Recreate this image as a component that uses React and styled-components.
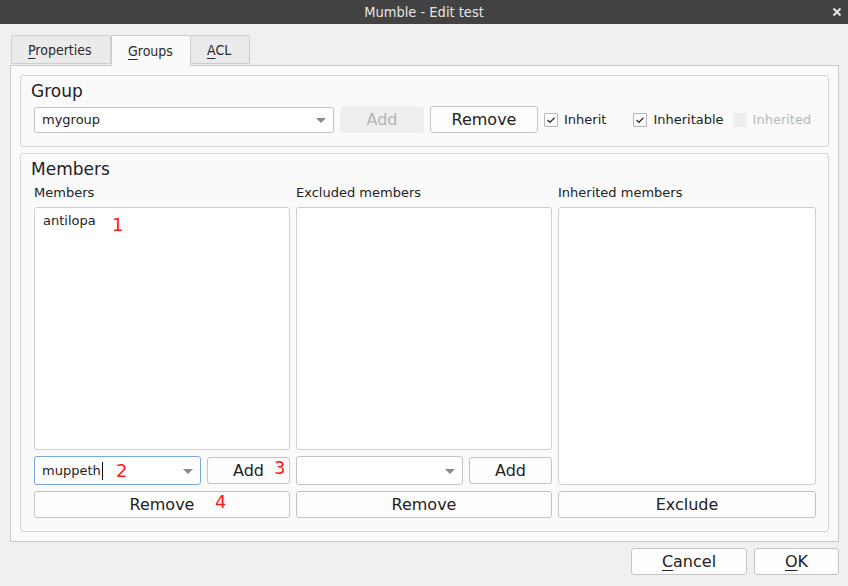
import React from 'react'
import styled, { createGlobalStyle } from 'styled-components'

const Global = createGlobalStyle`
  * { box-sizing: border-box; }
  html, body { margin: 0; padding: 0; background: #f0f0f0; }
  body {
    font-family: "DejaVu Sans", "Noto Sans", sans-serif;
    font-size: 13px;
    color: #222;
  }
`

const Window = styled.div`
  width: 848px;
  height: 586px;
  display: flex;
  flex-direction: column;
  background: #f0f0f0;
`

const TitleBar = styled.div`
  height: 24px;
  background: #424242;
  color: #e6e6e6;
  display: flex;
  align-items: center;
  justify-content: center;
  position: relative;
  font-family: "DejaVu Sans Condensed", "DejaVu Sans", sans-serif;
  font-stretch: condensed;
  font-size: 14.5px;
`

const Close = styled.span`
  position: absolute;
  right: 6px;
  top: 6px;
  width: 10px;
  height: 12px;
  display: flex;
  align-items: center;
`

const Body = styled.div`
  flex: 1;
  display: flex;
  flex-direction: column;
  padding: 11px 9px 11px 10px;
`

const TabBar = styled.div`
  display: flex;
  padding-left: 1px;
  height: 30px;
  align-items: flex-end;
  position: relative;
  z-index: 1;
`

const Tab = styled.div`
  width: ${p => p.$w}px;
  height: ${p => (p.$active ? '31px' : '29px')};
  margin-bottom: ${p => (p.$active ? '-1px' : '1px')};
  padding-left: 16px;
  display: flex;
  align-items: center;
  background: ${p => (p.$active ? '#fafafa' : '#ebebeb')};
  border: 1px solid #cdcdcd;
  border-bottom: ${p => (p.$active ? 'none' : '1px solid #cdcdcd')};
  border-left: ${p => (p.$first || p.$active ? '1px solid #cdcdcd' : 'none')};
  border-radius: 2px 2px 0 0;
  font-family: "DejaVu Sans Condensed", "DejaVu Sans", sans-serif;
  font-stretch: condensed;
  font-size: 14px;
  color: #2a2a2a;
  u { text-decoration-thickness: 1px; text-underline-offset: 3px; }
`

const Pane = styled.div`
  flex: 1;
  background: #fafafa;
  border: 1px solid #c9c9c9;
  padding: 9px;
  display: flex;
  flex-direction: column;
  gap: 6px;
`

const GroupBox = styled.div`
  border: 1px solid #d6d6d6;
  border-radius: 3px;
  padding: 5px 13px 13px 13px;
  display: flex;
  flex-direction: column;
  gap: 5px;
  flex: ${p => (p.$grow ? 1 : 'none')};
`

const BoxTitle = styled.div`
  font-size: 17px;
  line-height: 20px;
  margin-left: -3px;
  color: #222;
`

const Row = styled.div`
  display: flex;
  align-items: center;
  gap: 6px;
`

const Combo = styled.div`
  position: relative;
  width: ${p => p.$w};
  flex: none;
  height: ${p => p.$h || 26}px;
  background: #fff;
  border: 1px solid ${p => (p.$focus ? '#7aa7d6' : '#c4c4c4')};
  border-radius: 3px;
  display: flex;
  align-items: center;
  padding: 0 7px;
  font-size: 13px;
  color: #222;
  &::after {
    content: '';
    position: absolute;
    right: 7px;
    top: 50%;
    margin-top: -2px;
    border-left: 5px solid transparent;
    border-right: 5px solid transparent;
    border-top: 5px solid #8a8a8a;
  }
`

const Caret = styled.span`
  display: inline-block;
  width: 1px;
  height: 18px;
  background: #111;
  margin-left: 1px;
`

const Button = styled.div`
  position: relative;
  width: ${p => p.$w || 'auto'};
  flex: ${p => (p.$fill ? 1 : 'none')};
  height: 27px;
  display: flex;
  align-items: center;
  justify-content: center;
  background: ${p => (p.$disabled ? '#eeeeee' : '#fdfdfd')};
  border: 1px solid ${p => (p.$disabled ? '#eeeeee' : '#c4c4c4')};
  border-radius: 3px;
  font-size: 16px;
  color: ${p => (p.$disabled ? '#b4b4b4' : '#222')};
  u { text-decoration-thickness: 1px; text-underline-offset: 3px; }
`

const Check = styled.label`
  display: flex;
  align-items: center;
  gap: 6px;
  font-size: 13px;
  color: ${p => (p.$disabled ? '#b8b8b8' : '#222')};
  margin-left: ${p => p.$ml || 0}px;
`

const Box = styled.span`
  width: 14px;
  height: 14px;
  border: 1px solid ${p => (p.$disabled ? '#ededed' : '#b6b6b6')};
  background: ${p => (p.$disabled ? '#ededed' : '#fff')};
  border-radius: 1px;
  display: flex;
  align-items: center;
  justify-content: center;
`

const Columns = styled.div`
  flex: 1;
  display: grid;
  grid-template-columns: 256px 256px 258px;
  gap: 6px;
`

const Column = styled.div`
  display: flex;
  flex-direction: column;
  gap: 6px;
`

const Label = styled.div`
  font-size: 13px;
  line-height: 16px;
  margin-top: 1px;
  color: #222;
`

const List = styled.div`
  position: relative;
  flex: 1;
  background: #fff;
  border: 1px solid #cfcfcf;
  border-radius: 3px;
  padding: 4px 8px;
  font-size: 13px;
  line-height: 18px;
`

const Mark = styled.span`
  position: absolute;
  left: ${p => p.$x}px;
  top: ${p => p.$y}px;
  color: #ff1a1a;
  font-size: 18px;
  line-height: 18px;
  font-family: "DejaVu Sans", sans-serif;
`

const Footer = styled.div`
  display: flex;
  justify-content: flex-end;
  gap: 7px;
  padding-top: 6px;
`

function Tick() {
  return (
    <svg width="10" height="8" viewBox="0 0 10 8">
      <path d="M1.5 4 L4 6.3 L8.5 1.8" fill="none" stroke="#333" strokeWidth="1.4" />
    </svg>
  )
}

export default function App() {
  return (
    <Window>
      <Global />
      <TitleBar>
        Mumble - Edit test
        <Close>
          <svg width="10" height="10" viewBox="0 0 10 10">
            <path d="M1.5 1.5 L8.5 8.5 M8.5 1.5 L1.5 8.5" stroke="#e6e6e6" strokeWidth="2" />
          </svg>
        </Close>
      </TitleBar>
      <Body>
        <TabBar>
          <Tab $first $w={100}><span><u>P</u>roperties</span></Tab>
          <Tab $active $w={80}><span><u>G</u>roups</span></Tab>
          <Tab $w={59}><span><u>A</u>CL</span></Tab>
        </TabBar>
        <Pane>
          <GroupBox>
            <BoxTitle>Group</BoxTitle>
            <Row>
              <Combo $w="300px">mygroup</Combo>
              <Button $w="84px" $disabled>Add</Button>
              <Button $w="108px">Remove</Button>
              <Check><Box><Tick /></Box>Inherit</Check>
              <Check $ml={21}><Box><Tick /></Box>Inheritable</Check>
              <Check $ml={3} $disabled><Box $disabled />Inherited</Check>
            </Row>
          </GroupBox>
          <GroupBox $grow>
            <BoxTitle>Members</BoxTitle>
            <Columns>
              <Column>
                <Label>Members</Label>
                <List>
                  antilopa
                  <Mark $x={77} $y={8}>1</Mark>
                </List>
                <Row>
                  <Combo $w="167px" $h={29} $focus>
                    muppeth<Caret />
                    <Mark $x={81} $y={5}>2</Mark>
                  </Combo>
                  <Button $fill>
                    Add
                    <Mark $x={66} $y={1}>3</Mark>
                  </Button>
                </Row>
                <Button>
                  Remove
                  <Mark $x={180} $y={1}>4</Mark>
                </Button>
              </Column>
              <Column>
                <Label>Excluded members</Label>
                <List />
                <Row>
                  <Combo $w="167px" $h={29} />
                  <Button $fill>Add</Button>
                </Row>
                <Button>Remove</Button>
              </Column>
              <Column>
                <Label>Inherited members</Label>
                <List />
                <Button>Exclude</Button>
              </Column>
            </Columns>
          </GroupBox>
        </Pane>
        <Footer>
          <Button $w="116px"><span><u>C</u>ancel</span></Button>
          <Button $w="85px"><span><u>O</u>K</span></Button>
        </Footer>
      </Body>
    </Window>
  )
}
